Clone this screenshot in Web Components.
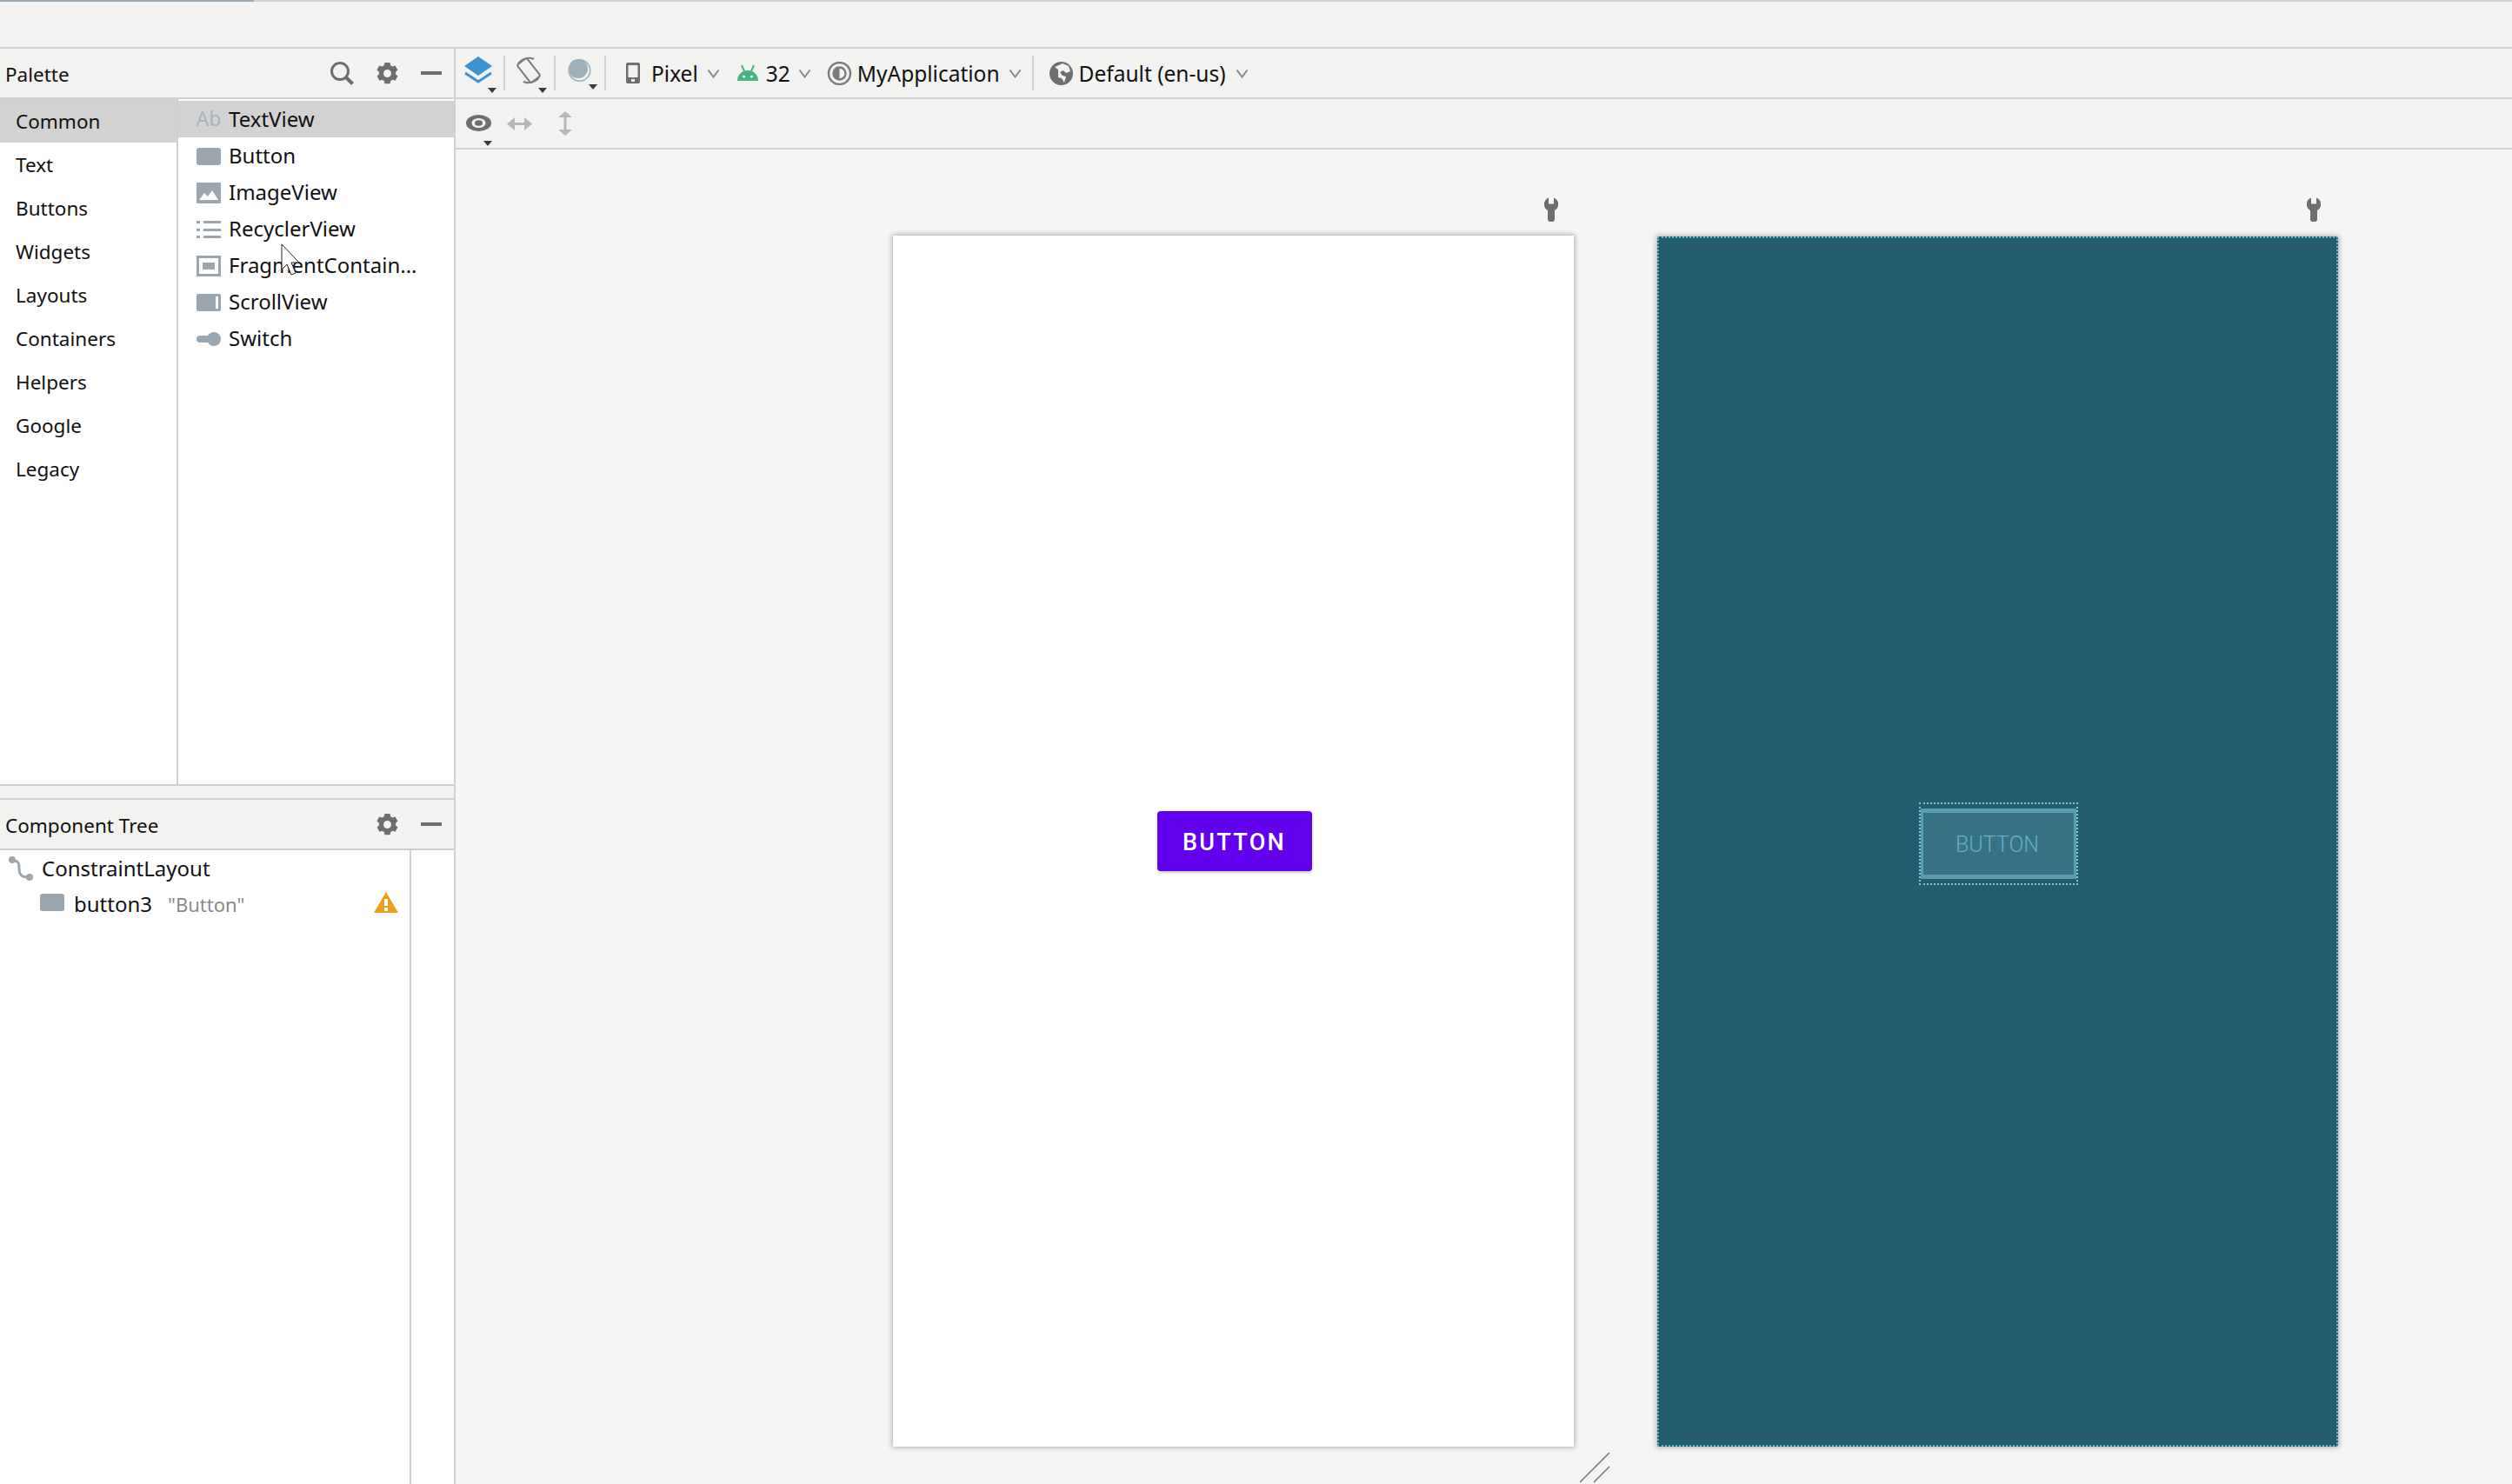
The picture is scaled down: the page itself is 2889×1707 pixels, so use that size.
<!DOCTYPE html>
<html>
<head>
<meta charset="utf-8">
<style>
html, body { margin: 0; height: 100%; overflow: hidden; }
body { font: 23px "Noto Sans", sans-serif; color: #111; background: #f5f5f5; }
</style>
</head>
<body>
<x-app></x-app>
<script>
const GEAR = `<svg width="25" height="27" viewBox="0 0 25 27"><path fill="#6e6e6e" fill-rule="evenodd" d="M9.5 1h6l.7 3.2 2.2 1.3 3.1-1 3 5.1-2.4 2.2v2.600l2.4 2.200-3 5.100-3.100-1-2.200 1.300-.7 3.200h-6l-.7-3.200-2.200-1.300-3.100 1-3-5.100 2.400-2.200v-2.600L.3 9.600l3-5.100 3.100 1 2.200-1.300zM12.500 9a4.500 4.500 0 1 0 0 9 4.500 4.500 0 0 0 0-9z"/></svg>`;
const ICONS = {
  search: `<svg width="28" height="28" viewBox="0 0 28 28"><circle cx="12" cy="12" r="9.500" fill="none" stroke="#6e6e6e" stroke-width="3"/><path d="M18.500 18.500l8 8" stroke="#6e6e6e" stroke-width="4"/></svg>`,
  gear: GEAR,
  minus: `<svg width="24" height="4"><rect width="24" height="4" fill="#6e6e6e"/></svg>`,
  button: `<svg width="28" height="21"><rect width="28" height="20" y="0" rx="3" fill="#9aa7b0"/></svg>`,
  image: `<svg width="28" height="24" viewBox="0 0 28 24"><path fill="#9aa7b0" d="M1 0h26a1 1 0 0 1 1 1v22a1 1 0 0 1-1 1H1a1 1 0 0 1-1-1V1a1 1 0 0 1 1-1z"/><path fill="#fff" d="M3 20l6-8 4 4 5-7 7 11z"/></svg>`,
  list: `<svg width="28" height="21" fill="#9aa7b0"><rect width="4" height="3"/><rect x="8" width="20" height="3"/><rect y="9" width="4" height="3"/><rect x="8" y="9" width="20" height="3"/><rect y="17" width="4" height="3"/><rect x="8" y="17" width="20" height="3"/></svg>`,
  fragment: `<svg width="28" height="24"><rect width="28" height="24" fill="#9aa7b0"/><rect x="3" y="3" width="22" height="18" fill="#fff"/><rect x="7" y="8" width="14" height="8" fill="#9aa7b0"/></svg>`,
  scroll: `<svg width="28" height="21"><rect width="28" height="20" rx="2" fill="#9aa7b0"/><rect x="22" y="3" width="3" height="14" fill="#fff"/></svg>`,
  toggle: `<svg width="28" height="18"><path fill="#9aa7b0" d="M4 5h10v8H4a4 4 0 0 1 0-8z"/><circle cx="20" cy="9" r="8" fill="#9aa7b0"/></svg>`,
  constraint: `<svg width="28" height="28" viewBox="0 0 28 28"><circle cx="4" cy="4" r="4" fill="#9aa7b0"/><circle cx="24" cy="24" r="4" fill="#9aa7b0"/><path d="M5 5c7 0 7 4 7 9s1 10 10 10" fill="none" stroke="#9aa7b0" stroke-width="3"/></svg>`,
  warn: `<svg width="28" height="24" viewBox="0 0 28 24"><path fill="#eaa01e" d="M14 0l14 24H0z"/><rect x="12" y="8" width="4" height="8" fill="#fff"/><rect x="12" y="18" width="4" height="4" fill="#fff"/></svg>`,
  layers: `<svg width="32" height="32" viewBox="0 0 32 32"><path fill="#3d92d2" d="M16 0l16 11-16 11L0 11z"/><path fill="none" stroke="#3d92d2" stroke-width="3" d="M1 19l15 10 15-10"/></svg>`,
  rotate: `<svg width="32" height="32" viewBox="0 0 32 32"><rect x="9" y="3" width="14" height="26" rx="2" transform="rotate(-38 16 16)" fill="none" stroke="#7b7b7b" stroke-width="2"/><path d="M4 8A15 15 0 0 1 22 3M28 24A15 15 0 0 1 10 29" fill="none" stroke="#7b7b7b" stroke-width="2"/></svg>`,
  night: `<svg width="27" height="26" viewBox="0 0 27 26"><circle cx="13.500" cy="13" r="12.200" fill="none" stroke="#a9b7c0" stroke-width="2"/><circle cx="12" cy="11" r="11" fill="#9fb0ba"/></svg>`,
  phone: `<svg width="16" height="24"><rect width="16" height="24" rx="2" fill="#6e6e6e"/><rect x="2.500" y="3" width="11" height="14" fill="#f2f2f0"/><rect x="6" y="19" width="4" height="3" fill="#f2f2f0"/></svg>`,
  android: `<svg width="24" height="20" viewBox="0 0 24 20"><path fill="#45b583" d="M0 19C0 12 5 7 12 7s12 5 12 12z"/><path d="M5 1l3 7M19 1l-3 7" stroke="#45b583" stroke-width="2"/><circle cx="7.500" cy="14" r="1.500" fill="#fff"/><circle cx="16.500" cy="14" r="1.500" fill="#fff"/></svg>`,
  theme: `<svg width="29" height="27" viewBox="0 0 29 27"><circle cx="14.500" cy="13.500" r="12.500" fill="none" stroke="#7b7b7b" stroke-width="2.400"/><circle cx="14.500" cy="13.500" r="7" fill="none" stroke="#7b7b7b" stroke-width="2.400"/><path d="M14.500 6.500a7 7 0 0 0 0 14z" fill="#7b7b7b"/></svg>`,
  globe: `<svg width="29" height="27" viewBox="0 0 29 27"><circle cx="14.500" cy="13.500" r="13.500" fill="#6e6e6e"/><path d="M16 2l7 3 2 6-5 2-3-3-4 2 3 4 4 1-2 7-3-5-4-1V9L7 6z" fill="#f2f2f0"/></svg>`,
  eye: `<svg width="29" height="19" viewBox="0 0 29 19"><ellipse cx="14.500" cy="9.500" rx="14.500" ry="9.500" fill="#6e6e6e"/><ellipse cx="14.500" cy="9.500" rx="8" ry="5.500" fill="#f2f2f0"/><ellipse cx="14.500" cy="9.500" rx="4.500" ry="3.200" fill="#6e6e6e"/></svg>`,
  harrows: `<svg width="29" height="15" viewBox="0 0 29 15" fill="#b8b8b8"><path d="M0 7.500L9 0v15zM29 7.500L20 0v15z"/><rect x="8" y="6" width="13" height="3"/></svg>`,
  varrows: `<svg width="18" height="28" viewBox="0 0 18 28" fill="#b8b8b8"><path d="M9 0l8 7H1zM9 28l8-7H1z"/><rect x="7.500" y="6" width="3" height="16"/></svg>`,
  wrench: `<svg width="16" height="28" viewBox="0 0 16 28" fill="#6e6e6e"><path d="M5 .500v7h6v-7a8 8 0 0 1 1 14.500V26a2.500 2.500 0 0 1-2 2H6a2.500 2.500 0 0 1-2-2V15A8 8 0 0 1 5 .500z"/></svg>`
};

// element with its own shadow root
class Base extends HTMLElement {
  connectedCallback() {
    if (this.shadowRoot) return;
    this.attachShadow({ mode: 'open' }).innerHTML = this.render();
  }
}

class XIcon extends Base {
  render() {
    return `<style>:host{display:inline-flex;align-items:center;justify-content:center;flex:none}svg{display:block}</style>${ICONS[this.getAttribute('name')]}`;
  }
}

class XDrop extends Base {
  // small black triangle under a toolbar icon
  render() {
    return `<style>:host{display:block;position:relative;flex:none}
    i{position:absolute;right:var(--r,-5px);bottom:var(--b,-3px);width:0;height:0;border:5.500px solid transparent;border-top:6px solid #3a3a45;border-bottom:0}</style><slot></slot><i></i>`;
  }
}

class XChevron extends Base {
  render() {
    return `<style>:host{display:block;flex:none;width:15px;height:11px}svg{display:block}</style>
    <svg width="15" height="11" viewBox="0 0 15 11"><path d="M1.500 1.500l6 8 6-8" fill="none" stroke="#7f8b91" stroke-width="2"/></svg>`;
  }
}

class XSep extends Base {
  render() { return `<style>:host{display:block;flex:none;width:2px;height:40px;background:#d2d2d2}</style>`; }
}

class XPanelHeader extends Base {
  render() {
    return `<style>:host{display:flex;align-items:center;height:56px;padding:0 14px 0 6px;background:#f2f2f0;border-bottom:2px solid #d0d0d0}
    span{flex:1;font-size:22.500px;padding-top:2px;color:#111}
    ::slotted(x-icon){margin-left:26px}</style><span>${this.getAttribute('title')}</span><slot></slot>`;
  }
}

class XCategory extends Base {
  render() {
    return `<style>:host{display:flex;align-items:center;box-sizing:border-box;height:50px;padding:1px 0 0 18px;font-size:22.500px}
    :host([selected]){background:#d2d2d2}</style><slot></slot>`;
  }
}

class XPaletteItem extends Base {
  render() {
    return `<style>:host{display:flex;align-items:center;box-sizing:border-box;height:42px;padding:0 0 2px 21px;font-size:24px;white-space:nowrap}
    :host([selected]){background:#d2d2d2}
    .i{width:28px;display:flex;justify-content:center;margin:4px 9px 0 0;color:#a9b4bd}</style>
    <div class="i"><slot name="icon"></slot></div><slot></slot>`;
  }
}

class XPalette extends Base {
  render() {
    return `<style>:host{display:flex;height:788px;background:#fff}
    .cats{width:203px;border-right:2px solid #d0d0d0}
    .items{flex:1;padding-top:2px}</style>
    <div class="cats">
      <x-category selected>Common</x-category><x-category>Text</x-category><x-category>Buttons</x-category>
      <x-category>Widgets</x-category><x-category>Layouts</x-category><x-category>Containers</x-category>
      <x-category>Helpers</x-category><x-category>Google</x-category><x-category>Legacy</x-category>
    </div>
    <div class="items">
      <x-palette-item selected><span slot="icon" style="font-size:23px;line-height:1;margin-top:-3px">Ab</span>TextView</x-palette-item>
      <x-palette-item><x-icon slot="icon" name="button"></x-icon>Button</x-palette-item>
      <x-palette-item><x-icon slot="icon" name="image"></x-icon>ImageView</x-palette-item>
      <x-palette-item><x-icon slot="icon" name="list"></x-icon>RecyclerView</x-palette-item>
      <x-palette-item><x-icon slot="icon" name="fragment"></x-icon>FragmentContain...</x-palette-item>
      <x-palette-item><x-icon slot="icon" name="scroll"></x-icon>ScrollView</x-palette-item>
      <x-palette-item><x-icon slot="icon" name="toggle"></x-icon>Switch</x-palette-item>
    </div>`;
  }
}

class XTree extends Base {
  render() {
    return `<style>:host{display:flex;flex:1;min-height:0;background:#fff}
    .rows{width:471px;border-right:2px solid #d0d0d0}
    .row{display:flex;align-items:center;height:41px;font-size:24px;white-space:nowrap}
    .r1{padding-left:10px}.r1 x-icon{margin-right:10px}
    .r2{padding-left:46px;padding-right:13px}.r2 x-icon{margin-bottom:3px}.r2 x-icon:first-child{margin-right:11px}
    .hint{flex:1;margin-left:18px;color:#8a8a8a;font-size:22px}</style>
    <div class="rows">
      <div class="row r1"><x-icon name="constraint"></x-icon>ConstraintLayout</div>
      <div class="row r2"><x-icon name="button"></x-icon>button3<span class="hint">"Button"</span><x-icon name="warn"></x-icon></div>
    </div>`;
  }
}

class XSidebar extends Base {
  render() {
    return `<style>:host{display:flex;flex-direction:column;flex:none;width:522px;border-right:2px solid #d0d0d0;background:#f2f2f0}
    .strip{height:14px;border-top:2px solid #d0d0d0;border-bottom:2px solid #d0d0d0}</style>
    <x-panel-header title="Palette"><x-icon name="search"></x-icon><x-icon name="gear"></x-icon><x-icon name="minus"></x-icon></x-panel-header>
    <x-palette></x-palette>
    <div class="strip"></div>
    <x-panel-header title="Component Tree"><x-icon name="gear"></x-icon><x-icon name="minus"></x-icon></x-panel-header>
    <x-tree></x-tree>`;
  }
}

class XDesignBar extends Base {
  render() {
    return `<style>:host{display:flex;align-items:center;height:56px;padding-left:10px;background:#f2f2f0;border-bottom:2px solid #d0d0d0;font-size:24.500px;white-space:nowrap}
    x-drop,x-sep,x-icon,x-chevron,span{margin-right:var(--m,0)}
    x-drop x-icon{margin-right:0}</style>
    <x-drop style="--m:13px"><x-icon name="layers"></x-icon></x-drop>
    <x-sep style="--m:11px"></x-sep>
    <x-drop style="--m:13px"><x-icon name="rotate"></x-icon></x-drop>
    <x-sep style="--m:14px"></x-sep>
    <x-drop style="--m:15px;--r:-7px;--b:-2px"><x-icon name="night"></x-icon></x-drop>
    <x-sep style="--m:23px"></x-sep>
    <x-icon name="phone" style="--m:13px"></x-icon><span style="--m:10px">Pixel</span><x-chevron style="--m:20px"></x-chevron>
    <x-icon name="android" style="--m:9px"></x-icon><span style="--m:9px">32</span><x-chevron style="--m:18px"></x-chevron>
    <x-icon name="theme" style="--m:6px"></x-icon><span style="--m:10px">MyApplication</span><x-chevron style="--m:12px"></x-chevron>
    <x-sep style="--m:17px"></x-sep>
    <x-icon name="globe" style="--m:6px"></x-icon><span style="--m:11px">Default (en-us)</span><x-chevron></x-chevron>`;
  }
}

class XViewBar extends Base {
  render() {
    return `<style>:host{display:flex;align-items:center;height:56px;padding-left:12px;background:#f2f2f0;border-bottom:2px solid #d0d0d0}
    x-drop{margin-right:18px;--b:-10px;--r:-1px}x-icon{margin-right:29px}</style>
    <x-drop><x-icon name="eye" style="margin:0"></x-icon></x-drop><x-icon name="harrows"></x-icon><x-icon name="varrows"></x-icon>`;
  }
}

class XDevice extends Base {
  render() {
    return `<style>:host{display:flex;flex-direction:column;align-items:center;justify-content:center;position:relative;flex:none;width:783px;height:1393px;box-shadow:0 0 6px 1px rgba(0,0,0,.3)}
    :host([kind=design]){background:#fff}
    :host([kind=blueprint]){background:#235c6e;height:1392px;margin-top:1px;outline:2px dotted #5fb4ce;outline-offset:-2px}
    .wrench{position:absolute;top:-44px;right:18px;display:block}
    :host([kind=blueprint]) .wrench{top:-45px;right:20px}
    .btn{display:flex;align-items:center;justify-content:center;box-sizing:border-box}
    :host([kind=design]) .btn{width:178px;height:69px;margin-left:2px;padding-top:2px;background:#6200ee;border-radius:4px;color:#fff;font:500 27px Roboto,sans-serif;letter-spacing:2.300px;box-shadow:0 2px 3px rgba(0,0,0,.2)}
    .frame{box-sizing:border-box;width:183px;height:95px;margin-top:4px;margin-left:2px;border:2px dotted #7cc8de;padding:5px 0;display:flex}
    :host([kind=blueprint]) .btn{flex:1;border:solid #5a9db2;border-width:5px 3px;background:#397287;color:#63aec4;font:300 25px Roboto,sans-serif;padding-top:3px;padding-right:3px}</style>
    <x-icon class="wrench" name="wrench"></x-icon>
    ${this.getAttribute('kind') === 'design' ? '<div class="btn">BUTTON</div>' : '<div class="frame"><div class="btn">BUTTON</div></div>'}`;
  }
}

class XCanvas extends Base {
  render() {
    return `<style>:host{display:flex;flex:1;min-height:0;position:relative;align-items:flex-start;padding:99px 0 0 503px;gap:96px;background:#f5f5f5}
    svg{position:absolute;left:1293px;top:1499px}</style>
    <x-device kind="design"></x-device><x-device kind="blueprint"></x-device>
    <svg width="36" height="36" viewBox="0 0 36 36"><path d="M0 34L34 0M16 34L34 16" stroke="#707070" stroke-width="1.500" fill="none"/></svg>`;
  }
}

class XEditor extends Base {
  render() {
    return `<style>:host{display:flex;flex-direction:column;flex:1;min-width:0}</style>
    <x-design-bar></x-design-bar><x-view-bar></x-view-bar><x-canvas></x-canvas>`;
  }
}

class XApp extends Base {
  render() {
    return `<style>:host{display:flex;flex-direction:column;height:100vh;position:relative}
    .top{height:52px;flex:none;background:#f2f2f0;border-top:2px solid #d1d1d1;position:relative}
    .top i{position:absolute;left:0;top:-2px;width:292px;height:2px;background:#9aa7b5}
    .line{height:2px;flex:none;background:#d0d0d0}
    .main{display:flex;flex:1;min-height:0}
    .cursor{position:absolute;left:323px;top:280px}</style>
    <div class="top"><i></i></div><div class="line"></div>
    <div class="main"><x-sidebar></x-sidebar><x-editor></x-editor></div>
    <svg class="cursor" width="24" height="40" viewBox="0 0 24 40"><path d="M1 1v29l6-6 5 12 5-2-5-12h9z" fill="#fff" stroke="#222" stroke-width="1"/></svg>`;
  }
}

customElements.define('x-icon', XIcon);
customElements.define('x-drop', XDrop);
customElements.define('x-chevron', XChevron);
customElements.define('x-sep', XSep);
customElements.define('x-panel-header', XPanelHeader);
customElements.define('x-category', XCategory);
customElements.define('x-palette-item', XPaletteItem);
customElements.define('x-palette', XPalette);
customElements.define('x-tree', XTree);
customElements.define('x-sidebar', XSidebar);
customElements.define('x-design-bar', XDesignBar);
customElements.define('x-view-bar', XViewBar);
customElements.define('x-device', XDevice);
customElements.define('x-canvas', XCanvas);
customElements.define('x-editor', XEditor);
customElements.define('x-app', XApp);
</script>
</body>
</html>
